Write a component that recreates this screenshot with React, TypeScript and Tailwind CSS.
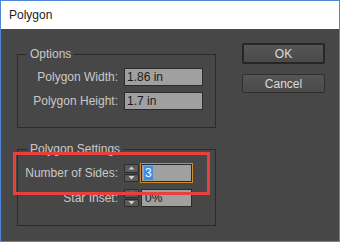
function Spinner() {
  return (
    <div className="flex h-[18px] w-[15px] flex-col gap-px">
      <div className="flex flex-1 items-center justify-center rounded-[1px] border border-[#2c2c2c] bg-[#5a5a5a]">
        <svg width="7" height="5" viewBox="0 0 7 5">
          <path d="M3.5 0.5 L6.5 3.5 L0.5 3.5 Z" fill="#d0d0d0" />
        </svg>
      </div>
      <div className="flex flex-1 items-center justify-center rounded-[1px] border border-[#2c2c2c] bg-[#5a5a5a]">
        <svg width="7" height="5" viewBox="0 0 7 5">
          <path d="M0.5 1 L6.5 1 L3.5 4.5 Z" fill="#d0d0d0" />
        </svg>
      </div>
    </div>
  );
}

function Field({ label, value }: { label: string; value: string }) {
  return (
    <div className="flex h-[18px] items-center">
      <span className="w-[100px] text-right text-[12px] text-[#c9c9c9]">{label}</span>
      <div className="ml-[6px] flex h-[18px] w-[79px] items-center border border-[#2b2b2b] bg-[#a0a0a0] pl-[2px] text-[12px] text-[#1a1a1a]">
        {value}
      </div>
    </div>
  );
}

export default function App() {
  return (
    <div
      className="relative flex h-[242px] w-[340px] flex-col overflow-hidden border border-[#4f86d6] bg-[#474747]"
      style={{ fontFamily: '"Liberation Sans", Arial, sans-serif' }}
    >
      {/* Title bar */}
      <div className="flex h-[28px] shrink-0 items-center bg-white pl-[8px] text-[12px] text-[#1b1b1b]">
        Polygon
      </div>

      <div className="flex flex-1 pl-[16px]">
        {/* Left: group boxes */}
        <div className="flex w-[199px] flex-col pt-[18px]">
          <fieldset className="h-[81px] border border-[#2b2b2b] px-0 pt-[7px]">
            <legend className="ml-[9px] px-[3px] text-[12px] leading-[14px] text-[#c9c9c9]">Options</legend>
            <div className="flex flex-col gap-[6px]">
              <Field label="Polygon Width:" value="1.86 in" />
              <Field label="Polygon Height:" value="1.7 in" />
            </div>
          </fieldset>

          <fieldset className="mt-[14px] h-[84px] border border-[#2b2b2b] px-0 pt-[8px]">
            <legend className="ml-[9px] px-[3px] text-[12px] leading-[14px] text-[#c9c9c9]">Polygon Settings</legend>
            <div className="flex flex-col gap-[7px]">
              <div className="flex h-[18px] items-center">
                <span className="w-[100px] text-right text-[12px] text-[#c9c9c9]">Number of Sides:</span>
                <div className="ml-[6px]">
                  <Spinner />
                </div>
                <div className="ml-[2px] flex h-[18px] w-[51px] items-center border border-[#2b2b2b] bg-[#a0a0a0] pl-[2px] text-[12px] text-white outline outline-1 outline-[#d08a2c]">
                  <span className="bg-[#3a8ee6] px-px leading-[14px]">3</span>
                </div>
              </div>
              <div className="flex h-[18px] items-center">
                <span className="w-[100px] text-right text-[12px] text-[#c9c9c9]">Star Inset:</span>
                <div className="ml-[6px]">
                  <Spinner />
                </div>
                <div className="ml-[2px] flex h-[18px] w-[51px] items-center border border-[#2b2b2b] bg-[#a0a0a0] pl-[3px] text-[12px] text-[#1a1a1a]">
                  0%
                </div>
              </div>
            </div>
          </fieldset>
        </div>

        {/* Right: buttons */}
        <div className="ml-[26px] flex w-[83px] flex-col gap-[10px] pt-[14px]">
          <button className="h-[21px] rounded-[2px] border-2 border-[#262626] bg-gradient-to-b from-[#555555] to-[#4a4a4a] text-[12px] text-[#dcdcdc]">
            OK
          </button>
          <button className="h-[19px] rounded-[2px] border border-[#2e2e2e] bg-gradient-to-b from-[#555555] to-[#4a4a4a] text-[12px] text-[#dcdcdc]">
            Cancel
          </button>
        </div>
      </div>

      {/* Red annotation box */}
      <div className="absolute left-[12px] top-[151px] h-[43px] w-[197px] border-[3px] border-[#e8403c]" />
    </div>
  );
}
